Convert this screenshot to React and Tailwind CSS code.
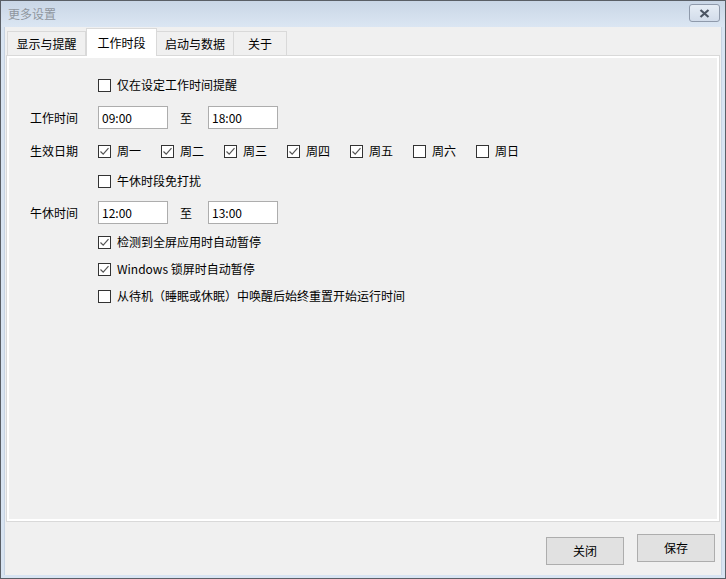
import { useState } from 'react'

const font = { fontFamily: '"Noto Sans CJK SC", "Liberation Sans", sans-serif' }

function Check({ checked, label, className = '' }) {
  return (
    <div className={'flex items-center h-5 ' + className}>
      <span className="w-[13px] h-[13px] border border-[#333] bg-white flex items-center justify-center shrink-0">
        {checked && (
          <svg width="11" height="11" viewBox="0 0 11 11">
            <path d="M1.5 5.5 L4.2 8.2 L9.5 2.2" fill="none" stroke="#555" strokeWidth="1.2" />
          </svg>
        )}
      </span>
      <span className="ml-[6px] text-[12px] text-black leading-none whitespace-nowrap">{label}</span>
    </div>
  )
}

function TimeBox({ value }) {
  return (
    <div className="w-[70px] h-[23px] border border-[#adadad] bg-white flex items-center pl-[3px] text-[12px] text-black">
      {value}
    </div>
  )
}

const days = [
  ['周一', true], ['周二', true], ['周三', true], ['周四', true],
  ['周五', true], ['周六', false], ['周日', false],
]

const tabs = ['显示与提醒', '工作时段', '启动与数据', '关于']
const tabW = ['w-[79px]', 'w-[71px]', 'w-[78px]', 'w-[54px]']

export default function App() {
  const [active] = useState(1)

  return (
    <div style={font} className="w-[726px] h-[579px] bg-[#5a5f66] p-px">
      <div className="w-full h-full bg-[#d8e4f2] flex flex-col">
        {/* title bar */}
        <div className="h-[26px] flex items-center justify-between pl-[7px] pr-[5px] bg-gradient-to-b from-[#c9d6e6] to-[#dbe6f3]">
          <span className="text-[12px] text-[#8f969e]">更多设置</span>
          <div className="w-[31px] h-[18px] mt-[-2px] border border-[#8f9aab] rounded-[3px] bg-gradient-to-b from-[#e6edf5] to-[#d2dcea] flex items-center justify-center">
            <svg width="11" height="9" viewBox="0 0 11 9">
              <path d="M1.5 1 L9.5 8 M9.5 1 L1.5 8" stroke="#4b5563" strokeWidth="2.2" />
            </svg>
          </div>
        </div>

        {/* client */}
        <div className="flex-1 mx-[3px] mb-[3px] bg-[#f0f0f0] border-l border-r border-[#c7d3e2] flex flex-col px-px">
          {/* tabs */}
          <div className="flex items-end h-[28px] pl-px">
            {tabs.map((t, i) =>
              i === active ? (
                <div
                  key={t}
                  className={tabW[i] + ' h-[28px] bg-white border border-b-0 border-[#d9d9d9] flex items-center justify-center text-[12px] text-black -mb-px z-10 relative'}
                >
                  {t}
                </div>
              ) : (
                <div
                  key={t}
                  className={tabW[i] + ' h-[24px] bg-[#f0f0f0] border border-b-0 border-[#d9d9d9] flex items-center justify-center text-[12px] text-black -ml-px first:ml-0'}
                >
                  {t}
                </div>
              )
            )}
          </div>

          {/* panel */}
          <div className="h-[467px] border border-[#d9d9d9] bg-white p-[2px]">
            <div className="w-full h-full bg-[#f0f0f0] pl-[21px] pt-[17px] text-[12px] text-black">
              <Check checked={false} label="仅在设定工作时间提醒" className="ml-[68px]" />

              <div className="flex items-center h-[23px] mt-[11px]">
                <span className="w-[68px]">工作时间</span>
                <TimeBox value="09:00" />
                <span className="w-[40px] pl-[12px]">至</span>
                <TimeBox value="18:00" />
              </div>

              <div className="flex items-center h-5 mt-[12px]">
                <span className="w-[68px]">生效日期</span>
                {days.map(([d, c]) => (
                  <Check key={d} checked={c} label={d} className="w-[63px]" />
                ))}
              </div>

              <Check checked={false} label="午休时段免打扰" className="ml-[68px] mt-[10px]" />

              <div className="flex items-center h-[23px] mt-[10px]">
                <span className="w-[68px]">午休时间</span>
                <TimeBox value="12:00" />
                <span className="w-[40px] pl-[12px]">至</span>
                <TimeBox value="13:00" />
              </div>

              <Check checked label="检测到全屏应用时自动暂停" className="ml-[68px] mt-[8px]" />
              <Check checked label="Windows 锁屏时自动暂停" className="ml-[68px] mt-[7px]" />
              <Check checked={false} label="从待机（睡眠或休眠）中唤醒后始终重置开始运行时间" className="ml-[68px] mt-[7px]" />
            </div>
          </div>

          {/* buttons */}
          <div className="flex justify-end items-start pr-[5px] mt-[12px]">
            <button className="w-[78px] h-[28px] mt-[3px] border border-[#adadad] bg-[#e1e1e1] text-[12px] text-black">关闭</button>
            <button className="w-[78px] h-[28px] ml-[13px] border border-[#adadad] bg-[#e1e1e1] text-[12px] text-black">保存</button>
          </div>
        </div>
      </div>
    </div>
  )
}
